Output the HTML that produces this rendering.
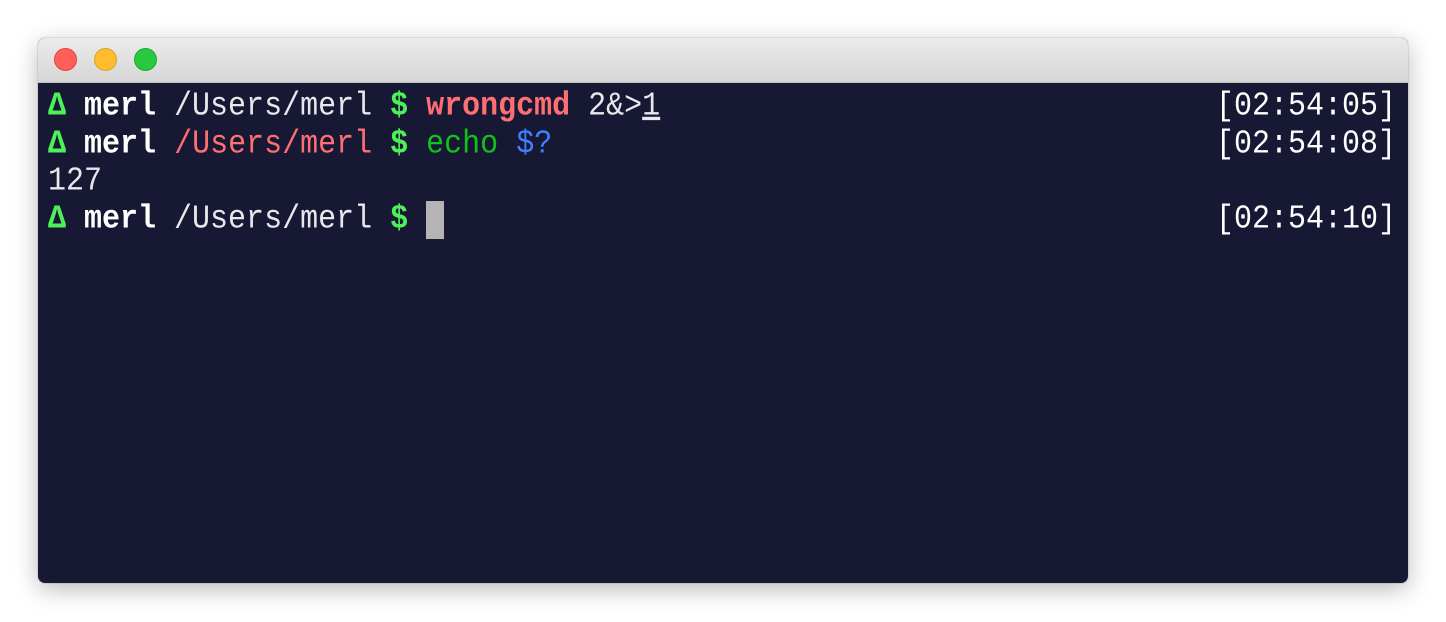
<!DOCTYPE html>
<html><head><meta charset="utf-8"><style>
html,body{margin:0;padding:0;background:#fff;width:1446px;height:622px;overflow:hidden}
.win{position:absolute;left:38px;top:38px;width:1370px;height:545px;border-radius:7px;overflow:hidden;box-shadow:0 6px 24px rgba(0,0,0,.28),0 0 0 1px rgba(0,0,0,.08);background:#171833}
.tb{height:44px;background:linear-gradient(#ebebeb,#d6d6d6);border-bottom:1px solid #c4c4c4;position:relative}
.d{position:absolute;top:10px;width:23px;height:23px;border-radius:50%}
.term{position:absolute;left:10px;top:51px;right:12px;font-family:"Liberation Mono","DejaVu Sans Mono",monospace;font-size:30px;line-height:37.7px;color:#e8e8ec}
.l{position:relative;height:37.7px;white-space:pre;transform:scaleY(1.1);transform-origin:50% 50%}
.t{position:absolute;right:0;top:0;color:#fff}
.g{color:#4ef05a;font-weight:bold}
.b{font-weight:bold;color:#fff}
.r{color:#ff6f72}
.gr{color:#10c21c}
.bl{color:#3d80ff}
.cur{display:inline-block;width:18px;height:38px;background:#b4b4b4;vertical-align:top;transform:scaleY(0.909) translateY(-1px)}
</style></head><body>
<div class="win">
<div class="tb"><div class="d" style="left:16px;background:#fe5f57;border:1px solid #e0443e;box-sizing:border-box"></div><div class="d" style="left:56px;background:#febc2e;border:1px solid #dea123;box-sizing:border-box"></div><div class="d" style="left:96px;background:#28c840;border:1px solid #1aab29;box-sizing:border-box"></div></div>
<div class="term"><div class="l"><span class="g">Δ</span> <span class="b">merl</span> /Users/merl <span class="g">$</span> <span class="r" style="font-weight:bold">wrongcmd</span> 2&amp;&gt;<span style="text-decoration:underline">1</span><span class="t">[02:54:05]</span></div><div class="l"><span class="g">Δ</span> <span class="b">merl</span> <span class="r">/Users/merl</span> <span class="g">$</span> <span class="gr">echo</span> <span class="bl">$?</span><span class="t">[02:54:08]</span></div><div class="l">127</div><div class="l"><span class="g">Δ</span> <span class="b">merl</span> /Users/merl <span class="g">$</span> <span class="cur"></span><span class="t">[02:54:10]</span></div></div>
</div>
</body></html>
